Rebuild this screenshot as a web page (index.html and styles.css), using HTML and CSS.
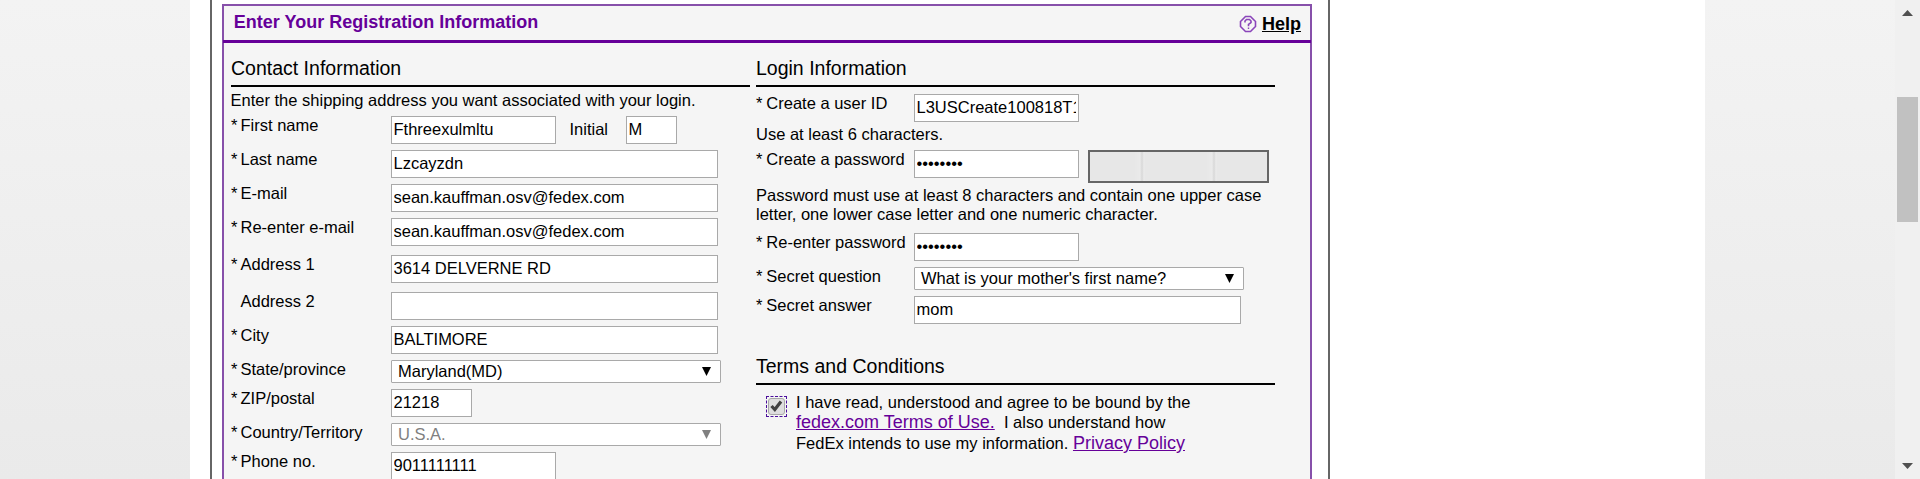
FILE: index.html
```html
<!DOCTYPE html>
<html lang="en">
<head>
<meta charset="utf-8">
<title>Registration</title>
<link rel="stylesheet" href="styles.css">
</head>
<body>
<div class="page">
  <main class="sheet">
    <div class="frame">
      <section class="panel">
        <header class="panel-head">
          <h1>Enter Your Registration Information</h1>
          <a class="help" href="#">
            <svg width="18" height="18" viewBox="0 0 18 18" fill="none" stroke="#8a45ba"><path d="M6.500 1.500h5L16.500 6.500v5L11.500 16.500H6.500L1.500 11.500V6.500z" stroke-width="1.600"/><path d="M6 7.500V6l1.500-1.500h3L12 6v1.500L9.500 9.500v1.800M8.800 13.300h1.400" stroke-width="1.600"/></svg>
            <span>Help</span>
          </a>
        </header>
        <div class="columns">
          <section class="col">
            <h2>Contact Information</h2>
            <p class="intro">Enter the shipping address you want associated with your login.</p>
            <div class="row"><label><i>*</i>First name</label><input class="mid" value="Fthreexulmltu"><span class="initial">Initial</span><input class="tiny" value="M"></div>
            <div class="row"><label><i>*</i>Last name</label><input value="Lzcayzdn"></div>
            <div class="row"><label><i>*</i>E-mail</label><input value="sean.kauffman.osv@fedex.com"></div>
            <div class="row spaced"><label><i>*</i>Re-enter e-mail</label><input value="sean.kauffman.osv@fedex.com"></div>
            <div class="row spaced"><label><i>*</i>Address 1</label><input value="3614 DELVERNE RD"></div>
            <div class="row"><label><i></i>Address 2</label><input value=""></div>
            <div class="row"><label><i>*</i>City</label><input value="BALTIMORE"></div>
            <div class="row"><label><i>*</i>State/province</label><div class="select"><span>Maryland(MD)</span><b class="arrow"></b></div></div>
            <div class="row"><label><i>*</i>ZIP/postal</label><input class="zip" value="21218"></div>
            <div class="row"><label><i>*</i>Country/Territory</label><div class="select disabled"><span>U.S.A.</span><b class="arrow"></b></div></div>
            <div class="row"><label><i>*</i>Phone no.</label><input class="mid" value="9011111111"></div>
          </section>
          <section class="col login">
            <h2>Login Information</h2>
            <div class="row first"><label><i>*</i>Create a user ID</label><input class="mid clip" value="L3USCreate100818T105530"></div>
            <p class="hint">Use at least 6 characters.</p>
            <div class="row"><label><i>*</i>Create a password</label><input class="mid" type="password" value="password"><div class="meter"></div></div>
            <p class="rules">Password must use at least 8 characters and contain one upper case<br>letter, one lower case letter and one numeric character.</p>
            <div class="row"><label><i>*</i>Re-enter password</label><input class="mid" type="password" value="password"></div>
            <div class="row"><label><i>*</i>Secret question</label><div class="select"><span>What is your mother's first name?</span><b class="arrow"></b></div></div>
            <div class="row"><label><i>*</i>Secret answer</label><input value="mom"></div>
            <h2 class="terms-title">Terms and Conditions</h2>
            <div class="terms">
              <span class="check"><svg width="17" height="17" viewBox="0 0 17 17"><rect x=".5" y=".5" width="16" height="16" rx="2.500" fill="#dedede" stroke="#a8a8a8"/><path d="M3.500 8l3.300 3.500L13 3.500" fill="none" stroke="#404040" stroke-width="3.200"/></svg></span>
              <div class="terms-text">
                <div class="l1">I have read, understood and agree to be bound by the</div>
                <div class="l2"><a href="#">fedex.com Terms of Use.</a>&nbsp; I also understand how</div>
                <div class="l3">FedEx intends to use my information. <a href="#">Privacy Policy</a></div>
              </div>
            </div>
          </section>
        </div>
      </section>
    </div>
  </main>
  <aside class="scrollbar">
    <svg width="11" height="6" viewBox="0 0 11 6"><path d="M0 6L5.500 0 11 6z" fill="#505050"/></svg>
    <div class="track"><div class="thumb"></div></div>
    <svg width="11" height="6" viewBox="0 0 11 6"><path d="M0 0L5.500 6 11 0z" fill="#505050"/></svg>
  </aside>
</div>
</body>
</html>
```
FILE: styles.css
```css
* { box-sizing: border-box; }
body { margin: 0; overflow: hidden; font: 16.5px/19px "Liberation Sans", Arial, sans-serif; color: #000; }
h1, h2, p { margin: 0; font-weight: normal; }
.page { display: flex; height: 479px; overflow: hidden; background: linear-gradient(#f3f3f3, #eaeaea); }
.sheet { width: 1515px; margin: 0 auto 0 190px; padding-left: 20px; background: #fff; }
.frame { width: 1120px; height: 479px; padding: 4px 16px 0 10px; border: solid #666; border-width: 0 2px; }
.panel { height: 500px; border: 2px solid #8750aa; background: #f5f5f5; }
.panel-head { display: flex; justify-content: space-between; height: 37px; margin: 0 -1px; padding: 6px 10px 0 10.8px; border-bottom: 3px solid #609; }
.panel-head h1 { font-weight: bold; font-size: 18px; line-height: 20px; color: #609; }
.help { display: flex; gap: 5px; height: 24px; padding-top: 2px; font-weight: bold; font-size: 18px; line-height: 20px; color: #000; }
.help svg { margin-top: 1px; }
.columns { display: flex; gap: 6px; padding: 14px 0 0 7px; }
.col { width: 519px; flex: none; }
h2 { height: 30px; border-bottom: 2px solid #000; font-size: 19.5px; line-height: 22px; }
.intro { margin: 4px 0 6px -0.5px; }
.row { display: flex; align-items: flex-start; height: 28px; margin-bottom: 6px; }
.row:has(.select) { height: 23px; }
.spaced { margin-bottom: 9px; }
label { width: 160px; flex: none; white-space: nowrap; }
.login label { width: 158px; }
label i { display: inline-block; width: 9.5px; font-style: normal; }
.login label i { width: 10.3px; }
input { width: 327px; height: 28px; margin: 0; padding: 0 1.5px 1px; border: 1px solid #a9a9a9; border-radius: 0; background: #fff; color: #000; font: inherit; outline: 0; }
.mid { width: 165px; }
.clip { padding-right: 2.5px; }
.zip { width: 81px; }
.tiny { width: 51px; }
.initial { width: 70px; padding: 4px 0 0 13.5px; }
.select { display: flex; justify-content: space-between; width: 330px; height: 23px; padding: 1px 9px 0 6px; border: 1px solid #a9a9a9; background: #fff; border-radius: 1px; }
.arrow { width: 9px; height: 9px; margin-top: 5px; background: #000; clip-path: polygon(0 0, 100% 0, 50% 100%); }
.disabled { color: #808080; }
.disabled .arrow { background: #808080; }
.first { margin: 7px 0 3px; }
.hint { margin-bottom: 6px; }
.meter { width: 181px; height: 33px; margin-left: 9px; border: 2px solid #666; background: linear-gradient(90deg, #e7e7e7 44px, #eaeaea 50px, #d8d8d8 52px, #ebebeb 54px, #e7e7e7 55px, #e7e7e7 116px, #eaeaea 122px, #d8d8d8 124px, #ebebeb 126px, #e7e7e7 127px); }
.rules { margin: 8px 0 9px; white-space: nowrap; }
.terms-title { margin-top: 31px; }
.terms { display: flex; padding: 8px 0 0 10px; }
.check { width: 21px; height: 21px; margin: 3px 9px 0 0; padding: 1px; border: 1px dashed #4b0f9b; }
.check svg { display: block; }
.terms-text { white-space: nowrap; }
.terms-text a { font-size: 18px; color: #609; }
.l2, .l3 { line-height: 20px; }
.l3 { margin-top: 1px; }
.scrollbar { display: flex; flex-direction: column; align-items: center; width: 25px; padding: 10px 0; background: #f0f0f0; }
.track { flex: 1; padding-top: 81px; }
.thumb { width: 21px; height: 125px; background: #c1c1c1; }
```
